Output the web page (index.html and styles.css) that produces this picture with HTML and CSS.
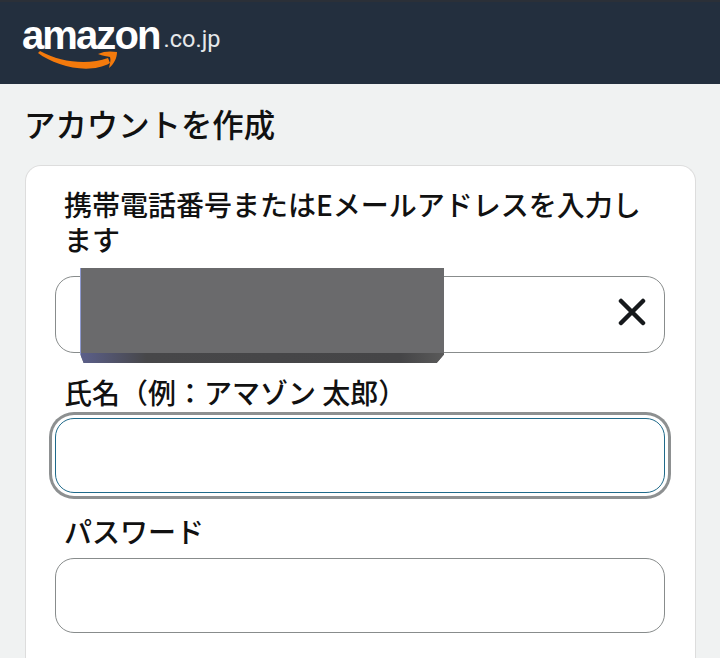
FILE: index.html
```html
<!DOCTYPE html>
<html lang="ja">
<head>
<meta charset="utf-8">
<title>アカウントを作成</title>
<link rel="stylesheet" href="styles.css">
</head>
<body>
<header class="nav">
  <div class="logo">
    <span class="wordmark">amazon</span><span class="tld">.co.jp</span>
    <svg class="smile" viewBox="0 0 84 26" width="84" height="26" aria-hidden="true">
      <path d="M1 2 C 18 15, 52 24, 73 12 L 71 7 C 52 14, 24 12, 3 0 Z" fill="#f47a0c"/>
      <path d="M61 3 C 67 0, 74 0, 80 1 C 80 7, 77 13, 72 17 C 73 12, 74 9, 73 6 C 70 5, 66 5, 61 3 Z" fill="#f47a0c"/>
    </svg>
  </div>
</header>
<main class="page">
  <h1 class="title">アカウントを作成</h1>
  <section class="card">
    <div class="field field-first">
      <label class="label">携帯電話番号またはEメールアドレスを入力します</label>
      <div class="box box-filled">
        <svg class="clear" viewBox="0 0 28 28" width="28" height="28" aria-hidden="true">
          <path d="M3 3 L25 25 M25 3 L3 25" stroke="#16191c" stroke-width="4.5" stroke-linecap="round" fill="none"/>
        </svg>
      </div>
      <div class="redact"><div class="redact-edge"></div></div>
    </div>
    <div class="field field-name">
      <label class="label">氏名（例：アマゾン 太郎）</label>
      <div class="box box-focus"></div>
    </div>
    <div class="field field-pass">
      <label class="label">パスワード</label>
      <div class="box"></div>
    </div>
  </section>
</main>
</body>
</html>
```
FILE: styles.css
```css
* { box-sizing: border-box; }
html, body { margin: 0; height: 658px; overflow: hidden; }
body {
  background: #f0f2f2;
  color: #111;
  font-family: "Noto Sans CJK JP", "Noto Sans", sans-serif;
}
.nav {
  height: 84px;
  background: #232f3e;
  border-top: 2px solid #2b3038;
  padding: 11px 0 0 22px;
}
.logo { position: relative; color: #fff; height: 60px; white-space: nowrap; }
.wordmark {
  font-family: "Liberation Sans", sans-serif;
  font-weight: 700;
  font-size: 40px;
  line-height: 44px;
  letter-spacing: -1.9px;
}
.tld {
  font-family: Roboto, sans-serif;
  font-size: 23.5px;
  margin-left: 4px;
  color: #e6e8ea;
  vertical-align: 2px;
}
.smile { position: absolute; left: 15px; top: 38px; }
.page { padding: 0 24px 0 25px; }
.title {
  margin: 0 0 0 -1px;
  height: 81px;
  font-size: 31.4px;
  font-weight: 500;
  line-height: 79px;
}
.card {
  background: #fff;
  border: 1px solid #ddd;
  border-bottom: 0;
  border-radius: 16px 16px 0 0;
  padding: 21px 30px 0 29px;
  height: 493px;
}
.field { position: relative; }
.label {
  display: block;
  padding: 0 10px 0 9px;
  font-size: 28px;
  font-weight: 500;
  line-height: 35px;
  color: #111;
}
.field-first .label { margin-bottom: 19px; }
.box {
  height: 75px;
  border: 1px solid #888c8c;
  border-radius: 19px;
  background: #fff;
  display: flex;
  align-items: center;
  justify-content: flex-end;
  padding-right: 18px;
}
.box-filled { height: 77px; }
.clear { margin-bottom: 6px; }
.field-name { margin-top: 22px; }
.field-name .label { margin-bottom: 8px; }
.box-focus {
  border-color: #1f6a8a;
  box-shadow: 0 0 0 3px #fff, 0 0 0 6px #8d9091;
}
.field-pass { margin-top: 21px; }
.field-pass .label { margin-bottom: 9px; }
.redact {
  position: absolute;
  left: 25px;
  top: 81px;
  width: 364px;
  height: 95px;
  background: #6a6a6c;
  border-left: 1px solid #8f9ad0;
  clip-path: polygon(0 0, 100% 0, 100% 91%, 98% 100%, 1% 100%, 0 90%);
}
.redact-edge {
  position: absolute;
  left: 0;
  right: 0;
  bottom: 0;
  height: 10px;
  background: linear-gradient(90deg, #5b5f8a, #474749 18%, #454547 88%, #5a5a5a);
}
```
